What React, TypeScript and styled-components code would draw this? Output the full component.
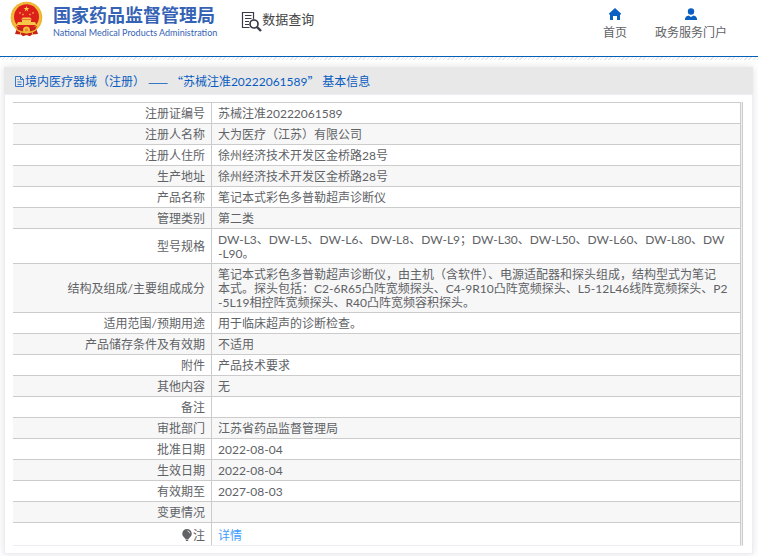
import React from "react";
import styled, { createGlobalStyle } from "styled-components";

const GlobalStyle = createGlobalStyle`
  * { box-sizing: border-box; }
  body {
    margin: 0;
    background: #fff;
    color: #606266;
    font: 12px/14px Lato, "Noto Sans CJK SC", sans-serif;
  }
`;

const Header = styled.header`
  display: flex;
  height: 57px;
  padding: 0 31px 0 10px;
  border-bottom: 1px solid #0360b9;
`;

const Hatch = styled.div`
  height: 3px;
  background: repeating-linear-gradient(135deg, #e6e6e6 0 1px, #fff 1px 3px);
`;

const Brand = styled.a`
  display: flex;
  gap: 10px;
  color: #3562b4;
  text-decoration: none;
`;

const Emblem = styled.svg`
  width: 33px;
  height: 36px;
  margin-top: 1px;
`;

const BrandText = styled.div`
  display: flex;
  flex-direction: column;
  padding-top: 4px;
  white-space: nowrap;
`;

const BrandName = styled.strong`
  font-size: 18px;
  line-height: 22px;
  font-weight: 700;
`;

const BrandSub = styled.span`
  font: 400 9px/14px Lato, sans-serif;
`;

const Section = styled.div`
  display: flex;
  align-items: flex-start;
  margin-left: 24px;
  padding-top: 10px;
  color: #444;
  font-size: 13px;
  line-height: 18px;
  white-space: nowrap;
`;

const SectionIcon = styled.svg`
  width: 21px;
  height: 22px;
`;

const Nav = styled.nav`
  display: flex;
  gap: 28px;
  margin-left: auto;
`;

const NavLink = styled.a`
  display: flex;
  flex-direction: column;
  align-items: center;
  gap: 4px;
  padding-top: 8px;
  color: #606266;
  line-height: 16px;
  text-decoration: none;
  white-space: nowrap;
`;

const NavIcon = styled.svg`
  width: 14px;
  height: 13px;
  fill: #0a5fc2;
`;

const Main = styled.main`
  padding: 7px 5px 3px 4px;
`;

const Panel = styled.section`
  border: 1px solid #ebeef5;
  border-top: 0;
  background: #fff;
  box-shadow: 0 0 8px rgba(0, 0, 0, 0.12);
`;

const PanelTitle = styled.h1`
  display: flex;
  align-items: center;
  height: 28px;
  margin: 0 -1px;
  padding: 3px 10px 0;
  border-bottom: 1px solid #ebeef5;
  background: #e8e8e8;
  color: #0a5cc0;
  font-size: 12px;
  font-weight: 400;
  white-space: pre;
`;

const WideMark = styled.span`
  font-family: "Noto Sans CJK SC", sans-serif;
`;

const TitleIcon = styled.svg`
  width: 11px;
  height: 12px;
  fill: none;
  stroke: #0a5cc0;
`;

const TableFrame = styled.div`
  margin: 7px 9px 7px 8px;
  padding-right: 1px;
  border-right: 1px solid #ccc;
  border-bottom: 1px solid #ebeef5;
  background: #ebeef5;
`;

const Table = styled.table`
  width: 100%;
  border-collapse: separate;
  border-spacing: 0;
  border-top: 1px solid #ccc;
  background: #fff;
`;

const Row = styled.tr`
  &:nth-child(even) { background: #f7f7f7; }
  &:last-child > * { padding-top: 6px; border-bottom: 0; }
`;

const Label = styled.th`
  width: 199px;
  padding: 4px 6px 2px;
  border-right: 1px solid #ccc;
  border-bottom: 1px solid #ccc;
  font-weight: 400;
  text-align: right;
`;

const Value = styled.td`
  height: 21px;
  padding: 4px 6px 2px;
  border-right: 1px solid #ccc;
  border-bottom: 1px solid #ccc;
  word-break: break-all;
`;

const DetailLink = styled.a`
  color: #409eff;
  text-decoration: none;
`;

const Bulb = styled.svg`
  width: 10px;
  height: 12px;
  margin-right: 1px;
  vertical-align: -1px;
  fill: #606266;
`;

const records: [string, string[]][] = [
  ["注册证编号", ["苏械注准20222061589"]],
  ["注册人名称", ["大为医疗（江苏）有限公司"]],
  ["注册人住所", ["徐州经济技术开发区金桥路28号"]],
  ["生产地址", ["徐州经济技术开发区金桥路28号"]],
  ["产品名称", ["笔记本式彩色多普勒超声诊断仪"]],
  ["管理类别", ["第二类"]],
  ["型号规格", ["DW-L3、DW-L5、DW-L6、DW-L8、DW-L9；DW-L30、DW-L50、DW-L60、DW-L80、DW", "-L90。"]],
  ["结构及组成/主要组成成分", [
    "笔记本式彩色多普勒超声诊断仪，由主机（含软件）、电源适配器和探头组成，结构型式为笔记",
    "本式。探头包括：C2-6R65凸阵宽频探头、C4-9R10凸阵宽频探头、L5-12L46线阵宽频探头、P2",
    "-5L19相控阵宽频探头、R40凸阵宽频容积探头。",
  ]],
  ["适用范围/预期用途", ["用于临床超声的诊断检查。"]],
  ["产品储存条件及有效期", ["不适用"]],
  ["附件", ["产品技术要求"]],
  ["其他内容", ["无"]],
  ["备注", []],
  ["审批部门", ["江苏省药品监督管理局"]],
  ["批准日期", ["2022-08-04"]],
  ["生效日期", ["2022-08-04"]],
  ["有效期至", ["2027-08-03"]],
  ["变更情况", []],
];

const STAR = "M0-3 .7-1H2.9L1.1.3 1.8 2.4 0 1.1-1.8 2.4-1.1.3-2.9-1H-.7z";

export default function App() {
  return (
    <>
      <GlobalStyle />
      <Header>
        <Brand href="#">
          <Emblem viewBox="0 0 33 36" aria-hidden="true">
            <path d="M7 27 5 33l6 .5 2 1.8 3.500-1.300 3.500 1.300 2-1.800 6-.5-2-6z" fill="#c9201c" />
            <circle cx="16.500" cy="16.500" r="15.800" fill="#f2bd3a" />
            <circle cx="16.500" cy="16.500" r="15" fill="none" stroke="#eaa92e" strokeDasharray="2 1.500" />
            <circle cx="16.500" cy="15.800" r="12.500" fill="#dc1f1b" />
            <path d={STAR} transform="translate(16.500 8)" fill="#ffd34a" />
            {[[10, 12], [13, 13.5], [20, 13.5], [23, 12]].map(([x, y]) => (
              <path key={x} d={STAR} transform={`translate(${x} ${y}) scale(.4)`} fill="#ffd34a" />
            ))}
            <path d="M11 18.500 13 16.500h7l2 2zM12 19h9v2h4l1.500 3h-20L8 21h4z" fill="#f6c84a" />
            <path d="M6 25q10.500 4 21 0l-2 4q-8.500 3-17 0z" fill="#c9201c" />
            <circle cx="16.500" cy="29" r="3.500" fill="#f2bd3a" />
            <circle cx="16.500" cy="29" r="1.500" fill="#e5862a" />
            <path d="m7 29 4 2-1 3M26 29l-4 2 1 3" fill="none" stroke="#f0b53a" />
          </Emblem>
          <BrandText>
            <BrandName>国家药品监督管理局</BrandName>
            <BrandSub>National Medical Products Administration</BrandSub>
          </BrandText>
        </Brand>
        <Section>
          <SectionIcon viewBox="0 0 21 22" fill="none" stroke="#3a3a48" aria-hidden="true">
            <path d="M8.500 17.500H1.500v-15h11v7M4 5.500h6.500M4 8.500h6.500M4 11.500h4M4 14.500h4" strokeWidth="1.200" />
            <circle cx="13" cy="14" r="4" strokeWidth="1.700" />
            <path d="m16 17 4 4" strokeWidth="2.400" />
          </SectionIcon>
          数据查询
        </Section>
        <Nav>
          <NavLink href="#">
            <NavIcon viewBox="0 0 14 13" aria-hidden="true">
              <path d="M7 0 13 5.500V6.500h-1v5.500H9V8H5v4H2V6.500H1V5.500z" />
            </NavIcon>
            首页
          </NavLink>
          <NavLink href="#">
            <NavIcon viewBox="0 0 14 13" aria-hidden="true">
              <circle cx="7" cy="3.500" r="3.200" />
              <path d="M1 12V10.500Q1.500 8 4.500 7.500L7 9l2.500-1.500Q12.500 8 13 10.500V12z" />
            </NavIcon>
            政务服务门户
          </NavLink>
        </Nav>
      </Header>
      <Hatch />
      <Main>
        <Panel>
          <PanelTitle>
            <TitleIcon viewBox="0 0 11 12" aria-hidden="true">
              <path d="M1.500 .5h5l3 3v7h-8zM6.500 .5v3h3M3.500 3.500h1M3.500 6h4M3.500 8.500h4" strokeWidth=".8" />
            </TitleIcon>
            境内医疗器械（注册） <WideMark>—— “</WideMark>苏械注准20222061589<WideMark>” </WideMark>基本信息
          </PanelTitle>
          <TableFrame>
            <Table>
              <tbody>
                {records.map(([label, lines]) => (
                  <Row key={label}>
                    <Label scope="row">{label}</Label>
                    <Value>
                      {lines.map((line, i) => (
                        <React.Fragment key={line}>
                          {i > 0 && <br />}
                          {line}
                        </React.Fragment>
                      ))}
                    </Value>
                  </Row>
                ))}
                <Row>
                  <Label scope="row">
                    <Bulb viewBox="0 0 10 12" aria-hidden="true">
                      <path d="M5 0a4.700 4.700 0 0 0-3 8.300L3.500 10h3L8 8.300A4.700 4.700 0 0 0 5 0zM3.500 10.500h3L6 12H4z" />
                      <path d="M5.500 1.800q2 .4 2.300 2.500" fill="none" stroke="#fff" strokeWidth=".8" />
                    </Bulb>
                    注
                  </Label>
                  <Value><DetailLink href="#">详情</DetailLink></Value>
                </Row>
              </tbody>
            </Table>
          </TableFrame>
        </Panel>
      </Main>
    </>
  );
}
